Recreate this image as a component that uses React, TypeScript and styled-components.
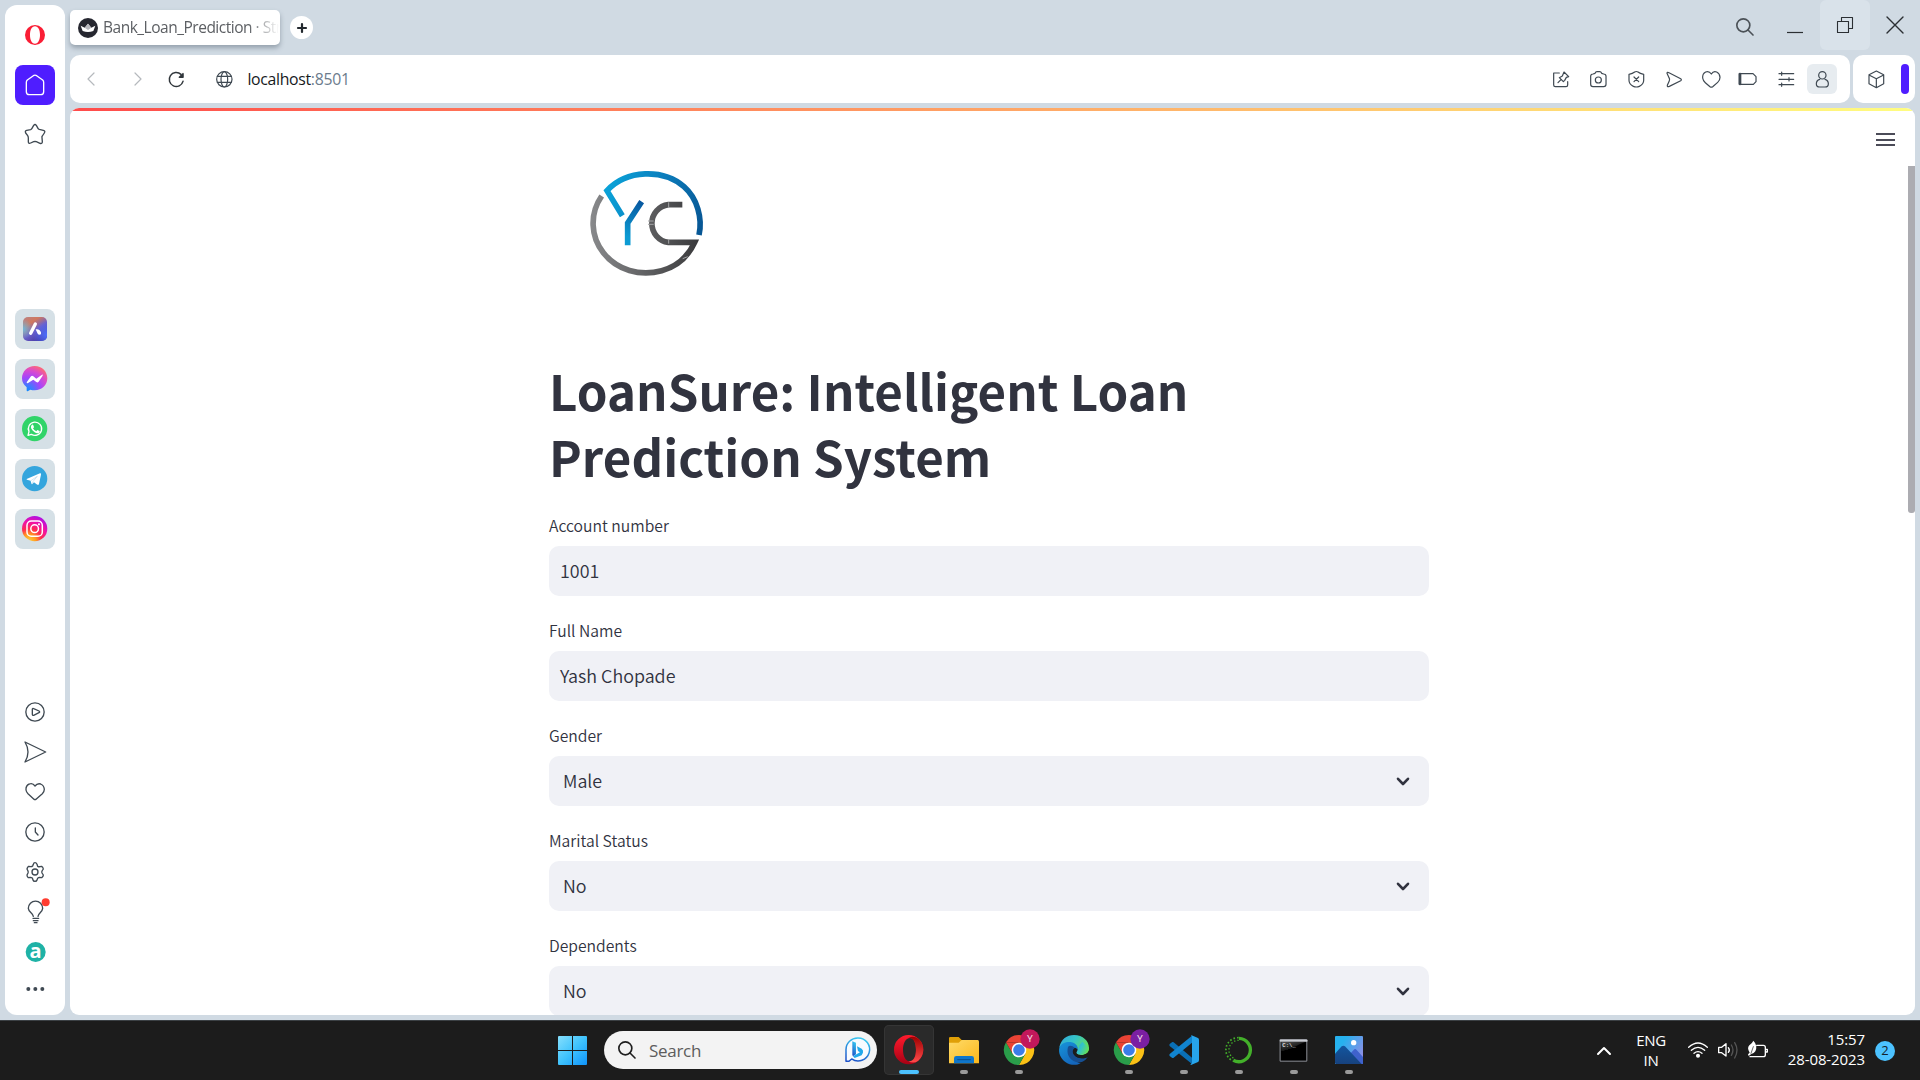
import React from 'react';
import styled, { createGlobalStyle } from 'styled-components';

const UI = '"Open Sans", "Noto Sans", sans-serif';
const SOURCE = '"Noto Sans CJK SC", "Noto Sans", sans-serif';
const INK = '#3f4952';

const GlobalStyle = createGlobalStyle`
  * { box-sizing: border-box; }
  body { margin: 0; background: #d0dae3; overflow: hidden; }
  svg { display: block; flex: none; overflow: visible; }
`;

const Desktop = styled.div`
  width: 1920px;
  height: 1080px;
  display: flex;
  flex-direction: column;
  overflow: hidden;
  background: #d0dae3;
  font-family: ${UI};
`;
const Browser = styled.div`
  height: 1020px;
  display: flex;
  gap: 5px;
  padding: 0 5px 5px;
`;

/* ---------- sidebar ---------- */
const Sidebar = styled.nav`
  width: 60px;
  margin-top: 5px;
  display: flex;
  flex-direction: column;
  align-items: center;
  background: #fff;
  border-radius: 12px;
`;
const SideGroup = styled.div<{ $gap?: number; $top?: number; $bottom?: number }>`
  display: flex;
  flex-direction: column;
  align-items: center;
  gap: ${(p) => p.$gap ?? 0}px;
  padding-top: ${(p) => p.$top ?? 0}px;
  padding-bottom: ${(p) => p.$bottom ?? 0}px;
  &:last-child { margin-top: auto; }
`;
const SideSlot = styled.div<{ $h: number }>`
  height: ${(p) => p.$h}px;
  width: 60px;
  padding-right: 1px;
  display: flex;
  align-items: center;
  justify-content: center;
`;
const SideTile = styled.div<{ $bg: string }>`
  width: 40px;
  height: 40px;
  border-radius: 8px;
  display: flex;
  align-items: center;
  justify-content: center;
  background: ${(p) => p.$bg};
`;

/* ---------- window chrome ---------- */
const Main = styled.div`
  flex: 1;
  min-width: 0;
  display: flex;
  flex-direction: column;
`;
const TabStrip = styled.header`
  height: 55px;
  display: flex;
  align-items: flex-start;
`;
const Tab = styled.div`
  width: 210px;
  height: 35px;
  margin-top: 10px;
  padding: 0 5px 0 8px;
  display: flex;
  align-items: center;
  gap: 5px;
  border-radius: 5px;
  background: #fff;
  box-shadow: 0 3px 5px rgba(60, 75, 90, 0.4);
`;
const TabTitle = styled.span`
  flex: 1;
  white-space: nowrap;
  font-size: 15.5px;
  line-height: 24px;
  letter-spacing: -0.49px;
  color: #5c5f63;
  padding-bottom: 1px;
  mask-image: linear-gradient(90deg, #000 145px, transparent 176px);
`;
const NewTab = styled.div`
  margin: 16px 0 0 10px;
  width: 23px;
  height: 23px;
  border-radius: 50%;
  background: #fff;
  display: flex;
  align-items: center;
  justify-content: center;
`;
const WindowButtons = styled.div`
  margin-left: auto;
  margin-right: -5px;
  display: flex;
`;
const WindowButton = styled.div<{ $active?: boolean; $drop?: number }>`
  width: 50px;
  height: 50px;
  padding-top: ${(p) => p.$drop ?? 0}px;
  border-radius: 6px;
  display: flex;
  align-items: center;
  justify-content: center;
  background: ${(p) => (p.$active ? '#d9e2ea' : 'transparent')};
`;
const BarRow = styled.div`
  display: flex;
  gap: 3px;
  height: 48px;
  margin-bottom: 5px;
`;
const AddressBar = styled.div`
  flex: 1;
  display: flex;
  align-items: center;
  padding: 0 13px 0 11px;
  background: #fff;
  border-radius: 10px;
`;
const NavIcons = styled.div`
  display: flex;
  align-items: center;
  gap: 27px;
`;
const PageIcons = styled.div`
  display: flex;
  align-items: center;
  gap: 31px;
  margin-left: 20px;
`;
const Url = styled.span`
  margin-left: 15px;
  font-size: 15.8px;
  line-height: 24px;
  color: #16191c;
  letter-spacing: -0.3px;
  span { color: #6c7c8d; }
`;
const BarIcons = styled.div`
  margin-left: auto;
  display: flex;
  align-items: center;
`;
const BarIcon = styled.div<{ $w: number }>`
  width: ${(p) => p.$w}px;
  display: flex;
  justify-content: center;
`;
const Profile = styled.div`
  width: 30px;
  height: 30px;
  border-radius: 6px;
  background: #e7ecf0;
  display: flex;
  align-items: center;
  justify-content: center;
`;
const SidePanel = styled.div`
  width: 62px;
  display: flex;
  align-items: center;
  justify-content: space-between;
  padding: 0 6px 0 14.500px;
  background: #fff;
  border-radius: 10px;
`;
const Accent = styled.div`
  width: 8px;
  height: 30px;
  border-radius: 4px;
  background: #4f1dff;
`;

/* ---------- web page ---------- */
const Page = styled.main`
  position: relative;
  flex: 1;
  min-height: 0;
  display: flex;
  flex-direction: column;
  overflow: hidden;
  background: #fff;
  border-radius: 9px;
`;
const Ribbon = styled.div`
  flex: none;
  height: 3px;
  background: linear-gradient(90deg, #ff4b4b, #fffd80);
`;
const MenuButton = styled.div`
  position: absolute;
  top: 25px;
  right: 20px;
  width: 19px;
  height: 13px;
  display: flex;
  flex-direction: column;
  justify-content: space-between;
`;
const MenuLine = styled.div`
  height: 2px;
  background: #4b4c58;
`;
const ScrollThumb = styled.div`
  position: absolute;
  top: 58px;
  right: 0;
  width: 7px;
  height: 347px;
  border-radius: 0 0 3px 3px;
  background: #acacb1;
`;
const Content = styled.div`
  width: 880px;
  flex: none;
  margin-left: 479px;
  padding-top: 39px;
  color: #31333f;
  font-family: ${SOURCE};
`;
const LogoBox = styled.div`
  height: 207px;
  padding-left: 11px;
`;
const Title = styled.h1`
  margin: 0;
  height: 154px;
  font-size: 49.2px;
  font-weight: 700;
  line-height: 66px;
  letter-spacing: 0.06px;
`;
const Field = styled.div`
  margin-bottom: 20px;
`;
const Label = styled.label`
  display: block;
  height: 35px;
  font-size: 15.7px;
  font-weight: 350;
  line-height: 29px;
`;
const Control = styled.div<{ $pad: number }>`
  height: 50px;
  border-radius: 10px;
  background: #f0f1f6;
  display: flex;
  align-items: center;
  justify-content: space-between;
  padding: 0 19px 0 ${(p) => p.$pad}px;
  font-size: 17.9px;
  font-weight: 350;
  line-height: 26px;
`;
const Value = styled.span`
  padding-bottom: 2px;
`;

/* ---------- taskbar ---------- */
const Taskbar = styled.footer`
  height: 60px;
  display: flex;
  align-items: stretch;
  background: #1c1c1c;
  border-top: 1px solid #3b4044;
`;
const StartButton = styled.div`
  width: 50px;
  margin-left: 547px;
  display: flex;
  align-items: center;
  justify-content: center;
`;
const SearchBox = styled.div`
  width: 273px;
  height: 38px;
  margin: 10px 7px 0;
  padding: 0 7px 0 14px;
  display: flex;
  align-items: center;
  border-radius: 19px;
  background: #f3f3f3;
  color: #5d5d5d;
  font-size: 17px;
  span { flex: 1; margin-left: 13px; letter-spacing: -0.3px; padding-top: 1px; }
`;
const Apps = styled.div`
  display: flex;
  gap: 5px;
  padding-top: 4px;
`;
const AppTile = styled.div<{ $active?: boolean }>`
  width: 50px;
  height: 50px;
  padding-top: 10px;
  display: flex;
  flex-direction: column;
  align-items: center;
  justify-content: space-between;
  border-radius: 5px;
  background: ${(p) => (p.$active ? '#2a2a2a' : 'transparent')};
  box-shadow: ${(p) => (p.$active ? 'inset 0 0 0 1px #353535' : 'none')};
`;
const Running = styled.div<{ $active?: boolean }>`
  width: ${(p) => (p.$active ? 20 : 8)}px;
  height: 4px;
  margin-bottom: 1px;
  border-radius: 2px;
  background: ${(p) => (p.$active ? '#4cc2ff' : '#9a9a9a')};
`;
const Tray = styled.div`
  margin-left: auto;
  display: flex;
  align-items: center;
  color: #fff;
  font-size: 15px;
  line-height: 20px;
  padding-right: 25px;
`;
const Lang = styled.div`
  width: 40px;
  margin: 0 17px 0 20px;
  padding-bottom: 2px;
  text-align: center;
  letter-spacing: -0.3px;
`;
const Status = styled.div`
  display: flex;
  gap: 10px;
  padding-bottom: 1px;
`;
const Clock = styled.div`
  width: 82px;
  margin-left: 15px;
  padding-bottom: 3px;
  text-align: right;
  white-space: nowrap;
  letter-spacing: -0.1px;
`;
const Badge = styled.div`
  width: 20px;
  height: 20px;
  margin-left: 10px;
  border-radius: 50%;
  background: #4cc2ff;
  color: #14222c;
  font-size: 13px;
  line-height: 19px;
  text-align: center;
`;

/* ---------- icons ---------- */
type IconProps = { box: string; w: number; h?: number; stroke?: string; sw?: number; children: React.ReactNode };
const Icon = ({ box, w, h, stroke = INK, sw = 4, children }: IconProps) => (
  <svg width={w} height={h ?? w} viewBox={box} fill="none" stroke={stroke} strokeWidth={sw} strokeLinecap="round" strokeLinejoin="round">
    {children}
  </svg>
);

const OperaSide = () => (
  <Icon box="0 0 60 60" w={20} stroke="none">
    <path fill="#fa1e35" fillRule="evenodd" d="M30 0a30 30 0 1 0 0 60a30 30 0 1 0 0-60zM30 4c10 0 15 12 15 26s-5 26-15 26s-15-12-15-26s5-26 15-26z" />
  </Icon>
);
const HomeIcon = () => (
  <Icon box="75 225 60 60" w={20} stroke="#fff">
    <path d="M79 247Q79 243 82 240L100 227Q105 224 110 227L128 240Q131 243 131 247V275Q131 284 122 284H88Q79 284 79 275Z" />
  </Icon>
);
const StarIcon = () => (
  <Icon box="73 374 60 60" w={20}>
    <path d="M99 378Q103 373 107 378L112 387Q113 389 116 390L128 393Q135 395 131 401L125 410Q123 412 124 415L125 427Q125 434 118 432L107 427Q103 426 99 427L90 431Q83 434 83 427L83 416Q83 412 81 409L75 401Q72 395 78 393L90 391Q93 390 94 387Z" />
  </Icon>
);
const AriaIcon = () => (
  <Icon box="0 0 72 72" w={24} stroke="none">
    <defs>
      <linearGradient id="aria" x1="0" y1="0" x2="0.7" y2="1">
        <stop offset="0" stopColor="#b98285" /><stop offset=".32" stopColor="#d0795f" /><stop offset=".62" stopColor="#6b5fc8" /><stop offset="1" stopColor="#4535a0" />
      </linearGradient>
      <radialGradient id="ariaL" cx="0" cy=".5" r=".42"><stop offset="0" stopColor="#6fb8dc" /><stop offset="1" stopColor="#6fb8dc" stopOpacity="0" /></radialGradient>
      <radialGradient id="ariaR" cx="1" cy=".75" r=".6"><stop offset="0" stopColor="#4b70ff" /><stop offset="1" stopColor="#4b70ff" stopOpacity="0" /></radialGradient>
    </defs>
    <rect width="72" height="72" rx="15" fill="url(#aria)" />
    <rect width="72" height="72" rx="15" fill="url(#ariaL)" />
    <rect width="72" height="72" rx="15" fill="url(#ariaR)" />
    <path d="M37 21L23 49" stroke="#fff" strokeWidth="10" strokeLinecap="round" />
    <path d="M38 37Q49 34 54 46L54 52Q45 56 43 48Z" fill="#fff" />
  </Icon>
);
const MessengerIcon = () => (
  <Icon box="0 0 76 76" w={25.3} stroke="none">
    <defs>
      <radialGradient id="msg" cx=".2" cy="1" r="1.1">
        <stop offset="0" stopColor="#0a8bff" /><stop offset=".2" stopColor="#3d7bff" /><stop offset=".5" stopColor="#a346fb" /><stop offset=".75" stopColor="#d84ad0" /><stop offset="1" stopColor="#ff6a70" />
      </radialGradient>
    </defs>
    <path fill="url(#msg)" d="M38 0C60 0 76 16 76 37S60 73 38 73Q31 73 25 71L17 76Q14 77 14 73V64Q0 53 0 37C0 16 17 0 38 0Z" />
    <path fill="#fff" d="M14 49L27 31Q30 28 34 31L43 38L60 26Q64 25 62 29L50 47Q47 51 43 48L34 41L17 52Q14 52 14 49Z" />
  </Icon>
);
const WhatsAppIcon = () => (
  <Icon box="0 0 76 76" w={25.3} stroke="none">
    <circle cx="38" cy="38" r="38" fill="#31d469" />
    <path d="M18 58L21 47A20 20 0 1 1 28 55Z" stroke="#fff" strokeWidth="4" />
    <path fill="#fff" d="M30 26Q33 25 34 28L36 33Q36 35 33 37Q36 43 43 46L46 42L53 45Q54 47 52 50Q46 54 38 49T27 36Q26 29 30 26Z" />
  </Icon>
);
const TelegramIcon = () => (
  <Icon box="0 0 76 76" w={25.3} stroke="none">
    <circle cx="38" cy="38" r="38" fill="#34a5dd" />
    <path fill="#fff" d="M14 39L54 22Q58 21 57 26L51 54Q50 58 46 56L36 49L31 54Q29 56 28 52L26 44L15 41Q13 40 14 39Z" />
    <path d="M27 44L46 31L33 47L31 53" stroke="#b9d9ec" strokeWidth="2" />
  </Icon>
);
const InstagramIcon = () => (
  <Icon box="0 0 76 76" w={25.3} stroke="none">
    <defs>
      <radialGradient id="ig" cx=".28" cy="1" r="1.1">
        <stop offset="0" stopColor="#ffd040" /><stop offset=".25" stopColor="#ff9a20" /><stop offset=".45" stopColor="#ff2a50" /><stop offset=".7" stopColor="#f012a8" /><stop offset="1" stopColor="#a010f0" />
      </radialGradient>
    </defs>
    <circle cx="38" cy="38" r="38" fill="url(#ig)" />
    <rect x="15" y="15" width="46" height="46" rx="13" stroke="#fff" strokeWidth="4.5" />
    <circle cx="38" cy="38" r="11.500" stroke="#fff" strokeWidth="4.500" />
    <circle cx="51" cy="25" r="3.200" fill="#fff" />
  </Icon>
);
const PlayIcon = () => (
  <Icon box="73 38 60 60" w={20}>
    <circle cx="103" cy="68" r="27.500" />
    <path d="M95 60Q95 56 99 58L115 65Q119 68 115 70L99 78Q95 79 95 75Z" />
  </Icon>
);
const SendIcon = () => (
  <Icon box="74 158 60 60" w={20}>
    <path d="M74 158L136 188L74 218Q92 188 74 158Z" />
  </Icon>
);
const HeartIcon = () => (
  <Icon box="73 278 60 60" w={20}>
    <path d="M103 290Q96 280 86 284Q75 288 76 302Q77 308 82 313L99 329Q103 333 107 329L125 313Q131 307 131 300Q130 288 120 284Q110 281 103 290Z" />
  </Icon>
);
const ClockIcon = () => (
  <Icon box="73 398 60 60" w={20}>
    <circle cx="103" cy="428" r="27.500" />
    <path d="M104 416V428L112 437" />
  </Icon>
);
const GearIcon = () => (
  <Icon box="73 518 60 60" w={20}>
    <path d="M98 525Q99 520 103 520T109 525L111 531Q115 533 117 532L123 531Q127 533 128 539L124 545Q123 548 124 551L128 557Q128 561 123 565L116 564Q112 565 111 567L109 572Q108 576 103 576T97 572L95 566Q92 564 89 564L83 565Q79 562 79 557L82 551Q83 548 82 545L79 539Q80 534 84 531L90 532Q94 532 96 530Z" />
    <circle cx="103" cy="548" r="9" />
  </Icon>
);
const BulbIcon = () => (
  <Icon box="73 638 60 60" w={20}>
    <path d="M98 681C97 671 84 669 83 657A21.500 21.500 0 0 1 126 657C125 669 113 671 112 681" />
    <path d="M97 687H114M98 694H112M101 700H109" />
    <circle cx="135" cy="639" r="12" fill="#ff3c30" stroke="none" />
  </Icon>
);
const AmazonIcon = () => (
  <Icon box="-2 0 60 60" w={20} stroke="none">
    <circle cx="30" cy="30" r="30" fill="#1fb2a6" />
    <text x="30" y="47" textAnchor="middle" fontFamily="Open Sans, sans-serif" fontWeight="700" fontSize="60" fill="#fff">a</text>
  </Icon>
);
const DotsIcon = () => (
  <Icon box="-1 0 54 12" w={18} h={4} stroke="none">
    {[6, 27, 48].map((x) => <circle key={x} cx={x} cy="6" r="6" fill={INK} />)}
  </Icon>
);

const CrownIcon = () => (
  <Icon box="0 0 60 60" w={20} stroke="none">
    <circle cx="30" cy="30" r="30" fill="#262730" />
    <path fill="#fff" d="M8 23L20 29L30 17L40 29L52 23L46 39Q30 45 14 39Z" />
    <path fill="#b9b9bf" d="M20 29L30 17L40 29L30 36Z" />
  </Icon>
);
const ReloadIcon = () => (
  <Icon box="504 211 50 50" w={16.700} sw={4.500} stroke="#30363b">
    <path d="M549 242A21 21 0 1 1 543 221" />
    <path fill="#30363b" d="M549 219V230H538Z" />
  </Icon>
);
const GlobeIcon = () => (
  <Icon box="647 212 50 50" w={16.700} sw={3.600}>
    <circle cx="672" cy="237" r="23" />
    <ellipse cx="672" cy="237" rx="10" ry="23" />
    <path d="M651 228H693M651 246H693" />
  </Icon>
);
const PinEdit = () => (
  <Icon box="98 212 50 50" w={16.700} sw={3.600}>
    <path d="M117 218H100V254Q100 259 105 259H137Q142 259 142 254V244" />
    <path d="M131 215L145 229L138 231L133 240L129 244L117 232L126 227Z" /><path d="M122 238L113 247" />
  </Icon>
);
const CameraIcon = () => (
  <Icon box="209 212 50 50" w={16.700} sw={3.600}>
    <path d="M211 228Q211 221 218 221L224 219Q226 214 230 214H238Q242 214 244 219L250 221Q257 221 257 228V252Q257 259 250 259H218Q211 259 211 252Z" />
    <circle cx="234" cy="239" r="9" />
  </Icon>
);
const ShieldIcon = () => (
  <Icon box="323 212 50 50" w={16.700} sw={3.600}>
    <path d="M326 222Q337 220 343 215Q348 212 353 215Q359 220 370 222V240Q370 252 357 258Q348 262 339 258Q326 252 326 240Z" />
    <path d="M341 230L355 244M355 230L341 244" />
  </Icon>
);
const FlyIcon = () => (
  <Icon box="437 212 50 50" w={16.700} sw={3.600}>
    <path d="M440 219Q440 214 446 217L481 235Q485 238 481 241L447 258Q440 261 441 255L447 241Q449 237 446 232Z" />
  </Icon>
);
const HeartBar = () => (
  <Icon box="548 212 50 50" w={16.700} sw={3.600}>
    <path d="M573 221Q566 211 556 215Q546 220 547 233Q548 241 555 247L569 259Q573 262 577 259L592 246Q599 240 599 231Q598 219 589 215Q579 211 573 221Z" />
  </Icon>
);
const BatteryIcon = () => (
  <Icon box="658 210 50 50" w={16.700} sw={3.600}>
    <path d="M656 218H697L706 227V242L698 250H656Z" /><path d="M658 219V249" strokeWidth="8" />
  </Icon>
);
const SlidersIcon = () => (
  <Icon box="774 212 50 50" w={16.700} sw={3.600}>
    <path d="M777 220H821M777 237H821M777 253H821M785 215V225M807 232V242M785 248V258" />
  </Icon>
);
const UserIcon = () => (
  <Icon box="884 212 50 50" w={16.700} sw={3.600}>
    <circle cx="909" cy="225" r="11" />
    <path d="M901 237Q891 240 891 250Q891 260 901 260H917Q927 260 927 250Q927 240 917 237" />
  </Icon>
);
const CubeIcon = () => (
  <Icon box="1043 212 50 50" w={16.700} sw={3.600}>
    <path d="M1068 212L1090 223V250L1068 262L1046 250V223ZM1046 224L1068 235L1090 224M1068 235V261" />
  </Icon>
);

const Logo = () => (
  <svg width={180} height={150} viewBox="0 0 540 450" fill="none" strokeWidth="17">
    <defs>
      <linearGradient id="blue" gradientUnits="userSpaceOnUse" x1="130" y1="150" x2="425" y2="240"><stop offset="0" stopColor="#0aa2d8" /><stop offset=".5" stopColor="#0b7dbc" /><stop offset="1" stopColor="#075694" /></linearGradient>
      <linearGradient id="yblue" gradientUnits="userSpaceOnUse" x1="200" y1="260" x2="245" y2="157"><stop offset="0" stopColor="#0c9bd3" /><stop offset="1" stopColor="#0758a0" /></linearGradient>
      <linearGradient id="gray" gradientUnits="userSpaceOnUse" x1="92" y1="0" x2="415" y2="0"><stop offset="0" stopColor="#88898b" /><stop offset="1" stopColor="#3a3a3c" /></linearGradient>
    </defs>
    <path stroke="url(#blue)" d="M417 255C428 205 412 145 372 110C310 56 200 58 141 122L187 197" />
    <path stroke="url(#yblue)" d="M245 155L203 219V286" />
    <path stroke="url(#gray)" d="M125 138C88 192 92 260 130 308C170 360 240 380 305 362C350 350 385 318 404 277H325A57 57 0 0 1 325 164H367" />
    <path stroke="#a4a5a7" strokeWidth="3" d="M326 157V172M326 269V281M264 213H281M264 223H281M368 326L383 320" />
  </svg>
);
const Chevron = () => (
  <Icon box="0 0 14 9" w={14} h={9} sw={2.600} stroke="#31333f"><path d="M2 1.800L7 7L12 1.800" /></Icon>
);

const WindowsLogo = () => (
  <Icon box="0 0 87 87" w={29} stroke="none">
    <defs><linearGradient id="win" x1="0" y1="0" x2="87" y2="87" gradientUnits="userSpaceOnUse"><stop offset="0" stopColor="#86dffc" /><stop offset=".5" stopColor="#3fc3fd" /><stop offset="1" stopColor="#0f93fa" /></linearGradient></defs>
    <path fill="url(#win)" d="M2 0H42V42H0V2ZM45 0H85L87 2V42H45ZM0 45H42V87H2L0 85ZM45 45H87V85L85 87H45Z" />
  </Icon>
);
const Magnifier = ({ color, size }: { color: string; size: number }) => (
  <Icon box="0 0 54 54" w={size} stroke={color} sw={5}><circle cx="22" cy="22" r="19.500" /><path d="M36 36L51 51" /></Icon>
);
const BingIcon = () => (
  <Icon box="0 0 76 76" w={25.300} stroke="none">
    <defs>
      <linearGradient id="bing" x1=".6" y1="0" x2=".3" y2="1"><stop offset="0" stopColor="#38c8f0" /><stop offset="1" stopColor="#1d52c8" /></linearGradient>
    </defs>
    <path d="M39 3A34.500 34.500 0 1 1 20 66L12 73H3V38A35 35 0 0 1 39 3Z" stroke="url(#bing)" strokeWidth="4.500" fill="#f8fbff" />
    <path fill="url(#bing)" d="M22 13L33 17V52L24 58L22 54Z" />
    <path fill="#21a8ea" d="M36 28L50 35Q56 39 54 47L50 55L29 63L24 58L45 46L39 42Z" />
  </Icon>
);
const OperaApp = () => (
  <Icon box="0 0 88 88" w={29.300} stroke="none">
    <defs><linearGradient id="opL" x1="0" y1="0" x2="0" y2="1"><stop offset="0" stopColor="#ff1b2d" /><stop offset="1" stopColor="#a70014" /></linearGradient><linearGradient id="opR" x1="0" y1="0" x2="0" y2="1"><stop offset="0" stopColor="#9c0000" /><stop offset="1" stopColor="#ff4b4b" /></linearGradient></defs>
    <path fill="url(#opL)" fillRule="evenodd" d="M44 0a44 44 0 1 0 0 88a44 44 0 1 0 0-88zM48 9c13 0 18 16 18 35s-5 35-18 35s-21-16-21-35s8-35 21-35z" />
    <path fill="url(#opR)" d="M44 9Q58 0 73 11A44 44 0 0 1 73 77Q58 88 42 78C58 82 66 65 66 44S58 6 44 9Z" />
  </Icon>
);
const FolderIcon = () => (
  <Icon box="0 0 90 90" w={30} stroke="none">
    <defs><linearGradient id="fold" x1="0" y1="0" x2="1" y2="1"><stop offset="0" stopColor="#ffdb69" /><stop offset="1" stopColor="#fbb71b" /></linearGradient></defs>
    <path fill="#e0a007" d="M0 9Q0 6 4 6H29L38 15H86V40H0Z" />
    <path fill="url(#fold)" d="M0 23H29L38 15H86Q90 15 90 20V85H0Z" />
    <path fill="#0f76cb" d="M15 85V70Q15 63 22 63H68Q75 63 75 70V85Z" />
    <path d="M26 74H64" stroke="#0b4f8e" strokeWidth="3" />
  </Icon>
);
const ChromeIcon = ({ badge }: { badge: string }) => (
  <Icon box="0 0 90 90" w={30} stroke="none">
    <path fill="#ea4335" d="M6 22A45 45 0 0 1 84 23H45Z" />
    <path fill="#fbc116" d="M84 22A45 45 0 0 1 45 90L64 56L45 23Z" />
    <path fill="#2a9d4a" d="M6 22A45 45 0 0 0 45 90L64 56H26Z" />
    <path fill="#ea4335" d="M6 22L26 56L45 45V23Z" />
    <circle cx="45" cy="45" r="22" fill="#fff" /><circle cx="45" cy="45" r="17.500" fill="#3b7de9" />
    <circle cx="78" cy="12" r="29" fill={badge} />
    <text x="78" y="22" textAnchor="middle" fontFamily="Roboto, sans-serif" fontSize="29" fill="#f3dbe6">Y</text>
  </Icon>
);
const EdgeIcon = () => (
  <Icon box="0 0 90 90" w={30} stroke="none">
    <defs>
      <linearGradient id="eTop" x1="0" y1="0" x2="1" y2=".5"><stop offset="0" stopColor="#31a6dc" /><stop offset=".5" stopColor="#35c4c7" /><stop offset="1" stopColor="#63de5a" /></linearGradient>
      <linearGradient id="eL" x1="0" y1="0" x2=".6" y2="1"><stop offset="0" stopColor="#1795da" /><stop offset="1" stopColor="#1465bb" /></linearGradient>
    </defs>
    <path fill="url(#eTop)" d="M1 37C6 12 24 0 45 0C72 0 90 18 90 39C90 53 79 60 66 60C57 60 51 57 54 52C60 42 50 34 42 34Z" />
    <path fill="url(#eL)" d="M1 38C8 23 25 19 38 22C52 25 59 37 56 47C50 35 37 39 35 52C33 70 52 84 65 84C54 92 34 92 18 80C3 68-2 52 1 38Z" />
    <path fill="#164f92" d="M27 36C22 53 28 75 52 81C67 85 80 77 86 66C73 73 52 71 44 58C39 50 42 42 48 39C40 32 31 30 27 36Z" />
    <path fill="#1c1c1c" d="M48 38C57 42 57 47 54 52C51 57 57 60 66 60C75 60 82 57 86 53L87 65C74 73 54 71 46 60C40 50 42 43 48 38Z" />
    <path fill="url(#eTop)" d="M60 32C60 45 50 50 53 55C57 61 78 61 86 52Q90 46 90 39L70 20Z" />
  </Icon>
);
const CodeIcon = () => (
  <Icon box="0 0 90 90" w={30} stroke="none">
    <path fill="#0a6fb5" d="M2 27L10 21Q12 20 14 22L69 68V87L2 33Q0 30 2 27Z" />
    <path fill="#1184cf" d="M2 63L10 69Q12 70 14 68L69 23V2L2 57Q0 60 2 63Z" />
    <path fill="#27a5ec" d="M66 0L87 9Q90 11 90 15V75Q90 79 87 81L66 90Q62 89 69 84V5Z" />
  </Icon>
);
const AnacondaIcon = () => (
  <Icon box="0 0 84 84" w={28} stroke="none">
    <path d="M42 7A35 35 0 1 1 25 73" stroke="#43b02a" strokeWidth="10" strokeLinecap="butt" />
    <path d="M41 5A37 37 0 0 0 23 75" stroke="#43b02a" strokeWidth="5" strokeDasharray="5 6" strokeLinecap="butt" />
    <path d="M41 13A29 29 0 0 0 28 68" stroke="#43b02a" strokeWidth="4" strokeDasharray="4 6" strokeLinecap="butt" />
  </Icon>
);
const TerminalIcon = () => (
  <Icon box="0 0 82 68" w={27.300} h={22.700} stroke="none">
    <defs><linearGradient id="term" x1="0" y1="0" x2=".5" y2="1"><stop offset="0" stopColor="#555" /><stop offset=".55" stopColor="#151515" /><stop offset=".56" stopColor="#000" /></linearGradient></defs>
    <rect x="1.500" y="1.500" width="79" height="65" fill="#000" stroke="#8f9299" strokeWidth="3" />
    <path fill="url(#term)" d="M4 8H78Q40 20 20 45L4 50Z" /><path d="M2 5H80" stroke="#c9ccd2" strokeWidth="6" />
    <text x="7" y="24" fontFamily="Liberation Mono, monospace" fontWeight="700" fontSize="17" fill="#ddd">C:\_</text>
  </Icon>
);
const PhotosIcon = () => (
  <Icon box="0 0 84 84" w={28} stroke="none">
    <defs><linearGradient id="sky" x1="0" y1="0" x2="1" y2=".6"><stop offset=".3" stopColor="#26b1ee" /><stop offset="1" stopColor="#8a8fe6" /></linearGradient><linearGradient id="hill" x1="0" y1="0" x2="0" y2="1"><stop offset="0" stopColor="#1256a0" /><stop offset="1" stopColor="#17427e" /></linearGradient></defs>
    <rect width="84" height="84" rx="3" fill="url(#sky)" />
    <path fill="#3f62cc" d="M44 55L58 40Q62 38 65 42L84 63V84H50Z" />
    <path fill="url(#hill)" d="M0 53L20 31Q25 27 30 31L80 84H3L0 81Z" />
    <circle cx="56" cy="20" r="8" fill="#fff" />
  </Icon>
);
const WifiIcon = () => (
  <Icon box="384 94 60 48" w={20} h={16} stroke="#fff" sw={4}>
    <path d="M386 110Q414 84 442 110M394 119Q414 101 434 119M402 128Q414 118 426 128" /><circle cx="414" cy="135" r="4" fill="#fff" />
  </Icon>
);
const SpeakerIcon = () => (
  <Icon box="474 96 60 48" w={20} h={16} stroke="#fff" sw={4}>
    <path d="M476 112H485L498 101V138L485 128H476Z" /><path d="M505 113Q511 120 505 127" />
    <path d="M514 105Q524 120 514 136M524 98Q538 120 524 144" stroke="#555" />
  </Icon>
);
const BatterySaver = () => (
  <Icon box="564 94 60 48" w={20} h={16} stroke="#fff" sw={4}>
    <path d="M590 104H610Q616 104 616 110V132Q616 138 610 138H570M617 116H622V124H617" />
    <path fill="#fff" stroke="none" d="M580 90Q594 104 586 122Q582 128 574 130L566 136L564 131L569 126Q560 112 568 104Q576 99 580 90Z" />
    <path d="M580 108L573 128" stroke="#1c1c1c" strokeWidth="2" />
  </Icon>
);
const TrayChevron = () => (
  <Icon box="0 0 14 9" w={14} h={9} sw={2} stroke="#fff"><path d="M1 8L7 2L13 8" /></Icon>
);

const fields = [
  { label: 'Account number', value: '1001', select: false },
  { label: 'Full Name', value: 'Yash Chopade', select: false },
  { label: 'Gender', value: 'Male', select: true },
  { label: 'Marital Status', value: 'No', select: true },
  { label: 'Dependents', value: 'No', select: true },
];
const messengers = [AriaIcon, MessengerIcon, WhatsAppIcon, TelegramIcon, InstagramIcon];
const shortcuts = [PlayIcon, SendIcon, HeartIcon, ClockIcon, GearIcon, BulbIcon, AmazonIcon];
const tools: [React.FC, number][] = [[PinEdit, 37], [CameraIcon, 37], [ShieldIcon, 38], [FlyIcon, 38], [HeartBar, 37], [BatteryIcon, 36], [SlidersIcon, 41]];
const apps = [
  <OperaApp />, <FolderIcon />, <ChromeIcon badge="#c2185b" />, <EdgeIcon />, <ChromeIcon badge="#7b1fa2" />,
  <CodeIcon />, <AnacondaIcon />, <TerminalIcon />, <PhotosIcon />,
];
const AppArt = styled.div`
  height: 30px;
  display: flex;
  align-items: center;
`;

export default function App() {
  return (
    <Desktop>
      <GlobalStyle />
      <Browser>
        <Sidebar>
          <SideGroup $top={10}>
            <SideSlot $h={40}><OperaSide /></SideSlot>
            <SideTileSlot><SideTile $bg="#4f1dff"><HomeIcon /></SideTile></SideTileSlot>
            <SideSlot $h={38}><StarIcon /></SideSlot>
          </SideGroup>
          <SideGroup $gap={10} $top={156}>
            {messengers.map((Glyph, i) => <SideTile key={i} $bg="#d5e0e6"><Glyph /></SideTile>)}
          </SideGroup>
          <SideGroup $bottom={10}>
            {shortcuts.map((Glyph, i) => <SideSlot key={i} $h={40}><Glyph /></SideSlot>)}
            <SideSlot $h={33}><DotsIcon /></SideSlot>
          </SideGroup>
        </Sidebar>
        <Main>
          <TabStrip>
            <Tab><CrownIcon /><TabTitle>Bank_Loan_Prediction · Str</TabTitle></Tab>
            <NewTab><Icon box="0 0 10 10" w={10} sw={2.200} stroke="#22282e"><path d="M5 1V9M1 5H9" /></Icon></NewTab>
            <WindowButtons>
              <WindowButton $drop={3}><Magnifier color="#4b5157" size={18} /></WindowButton>
              <WindowButton><Icon box="0 0 16 16" w={16} sw={1.200} stroke="#2b2f33"><path d="M0 15.500H16" strokeLinecap="butt" /></Icon></WindowButton>
              <WindowButton $active><Icon box="0 0 16 16" w={16} sw={1.100} stroke="#2b2f33"><path d="M.5 4.500H11.500V15.500H.5ZM4.500 4.500V.5H15.500V11.500H11.500" /></Icon></WindowButton>
              <WindowButton><Icon box="0 0 16 16" w={16} sw={1.400} stroke="#2b2f33"><path d="M0 0L16 16M16 0L0 16" /></Icon></WindowButton>
            </WindowButtons>
          </TabStrip>
          <BarRow>
            <AddressBar>
              <NavIcons>
                <Icon box="0 0 20 14" w={20} h={14} sw={1.200} stroke="#b5b9bd"><path d="M13 1L7 7L13 13" /></Icon>
                <Icon box="0 0 20 14" w={20} h={14} sw={1.200} stroke="#b5b9bd"><path d="M7 1L13 7L7 13" /></Icon>
              </NavIcons>
              <PageIcons><ReloadIcon /><GlobeIcon /></PageIcons>
              <Url>localhost<span>:8501</span></Url>
              <BarIcons>
                {tools.map(([Glyph, w], i) => <BarIcon key={i} $w={w}><Glyph /></BarIcon>)}
                <Profile><UserIcon /></Profile>
              </BarIcons>
            </AddressBar>
            <SidePanel><CubeIcon /><Accent /></SidePanel>
          </BarRow>
          <Page>
            <Ribbon />
            <Content>
              <LogoBox><Logo /></LogoBox>
              <Title>LoanSure: Intelligent Loan<br />Prediction System</Title>
              {fields.map((f) => (
                <Field key={f.label}>
                  <Label>{f.label}</Label>
                  <Control $pad={f.select ? 14 : 11}><Value>{f.value}</Value>{f.select && <Chevron />}</Control>
                </Field>
              ))}
            </Content>
            <MenuButton><MenuLine /><MenuLine /><MenuLine /></MenuButton>
            <ScrollThumb />
          </Page>
        </Main>
      </Browser>
      <Taskbar>
        <StartButton><WindowsLogo /></StartButton>
        <SearchBox><Magnifier color="#1f1f1f" size={18} /><span>Search</span><BingIcon /></SearchBox>
        <Apps>
          {apps.map((art, i) => (
            <AppTile key={i} $active={i === 0}>
              <AppArt>{art}</AppArt>
              {i !== 3 && <Running $active={i === 0} />}
            </AppTile>
          ))}
        </Apps>
        <Tray>
          <TrayChevron />
          <Lang>ENG<br />IN</Lang>
          <Status><WifiIcon /><SpeakerIcon /><BatterySaver /></Status>
          <Clock>15:57<br />28-08-2023</Clock>
          <Badge>2</Badge>
        </Tray>
      </Taskbar>
    </Desktop>
  );
}

const SideTileSlot = styled.div`
  height: 60px;
  display: flex;
  align-items: center;
`;
